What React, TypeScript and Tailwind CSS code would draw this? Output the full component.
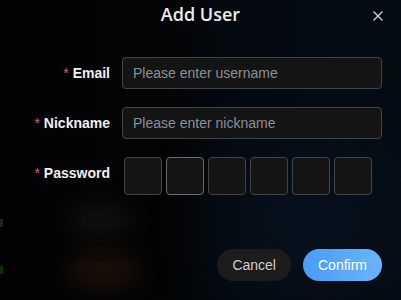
import React from "react";

export default function App() {
  const boxes = [0, 1, 2, 3, 4, 5];
  return (
    <div className="relative w-[401px] h-[300px] overflow-hidden bg-[#020202] font-['Liberation_Sans',Arial,sans-serif]">
      {/* backdrop */}
      <div className="absolute inset-0 bg-[linear-gradient(90deg,#020202_0%,#030405_42%,#04090f_56%,#050c14_100%)]" />
      <div className="absolute left-[230px] top-[150px] w-[150px] h-[140px] rounded-full bg-[#0a1a2c] opacity-50 blur-[40px]" />
      <div className="absolute left-[70px] top-[205px] w-[60px] h-[30px] rounded-full bg-[#1a1a1a] opacity-60 blur-[12px]" />
      <div className="absolute left-[68px] top-[255px] w-[70px] h-[30px] rounded-full bg-[#2a160a] opacity-70 blur-[12px]" />
      <div className="absolute left-0 top-[266px] w-[3px] h-[8px] bg-[#0d3a12] opacity-80" />
      <div className="absolute left-0 top-[219px] w-[3px] h-[8px] bg-[#2a2a2a] opacity-80" />

      <div className="relative flex flex-col">
        {/* header */}
        <div className="relative h-[28px] flex items-center justify-center">
          <span className="text-[18px] font-semibold text-[#ededed] font-['Open_Sans',sans-serif]">Add User</span>
          <svg className="absolute right-[18px] top-[11px]" width="10" height="10" viewBox="0 0 10 10">
            <path d="M0.5 0.5 L9.5 9.5 M9.5 0.5 L0.5 9.5" stroke="#d8d8d8" strokeWidth="1.3" />
          </svg>
        </div>

        {/* form */}
        <div className="mt-[29px] flex flex-col gap-[18px]">
          <div className="flex items-start">
            <label className="w-[110px] h-8 flex items-center justify-end text-[14px] font-bold text-[#f0f0f0]">
              <span className="text-[#d9605c] mr-1 font-normal">*</span>Email
            </label>
            <div className="ml-3 w-[260px] h-8 rounded-[4px] border border-[#444] bg-[#141414] flex items-center px-[10px] text-[14px] text-[#8a9099]">
              Please enter username
            </div>
          </div>
          <div className="flex items-start">
            <label className="w-[110px] h-8 flex items-center justify-end text-[14px] font-bold text-[#f0f0f0]">
              <span className="text-[#d9605c] mr-1 font-normal">*</span>Nickname
            </label>
            <div className="ml-3 w-[260px] h-8 rounded-[4px] border border-[#444] bg-[#141414] flex items-center px-[10px] text-[14px] text-[#8a9099]">
              Please enter nickname
            </div>
          </div>
          <div className="flex items-start">
            <label className="w-[110px] h-8 flex items-center justify-end text-[14px] font-bold text-[#f0f0f0]">
              <span className="text-[#d9605c] mr-1 font-normal">*</span>Password
            </label>
            <div className="ml-[14px] flex gap-1">
              {boxes.map((i) => (
                <div
                  key={i}
                  className={
                    i === 1
                      ? "w-[38px] h-[38px] rounded-[4px] border border-[#6b6b6b] bg-[#141414]"
                      : "w-[38px] h-[38px] rounded-[4px] border border-[#444] bg-[#141414]"
                  }
                />
              ))}
            </div>
          </div>
        </div>

        {/* footer */}
        <div className="mt-[54px] flex justify-end gap-3 pr-[19px]">
          <button className="h-8 px-[15px] rounded-full bg-[#1c1c1c] text-[14px] text-[#cfcfcf]">Cancel</button>
          <button className="h-8 px-[15px] rounded-full bg-[linear-gradient(90deg,#4b9cf6,#6bb3fd)] text-[14px] text-white">Confirm</button>
        </div>
      </div>
    </div>
  );
}
